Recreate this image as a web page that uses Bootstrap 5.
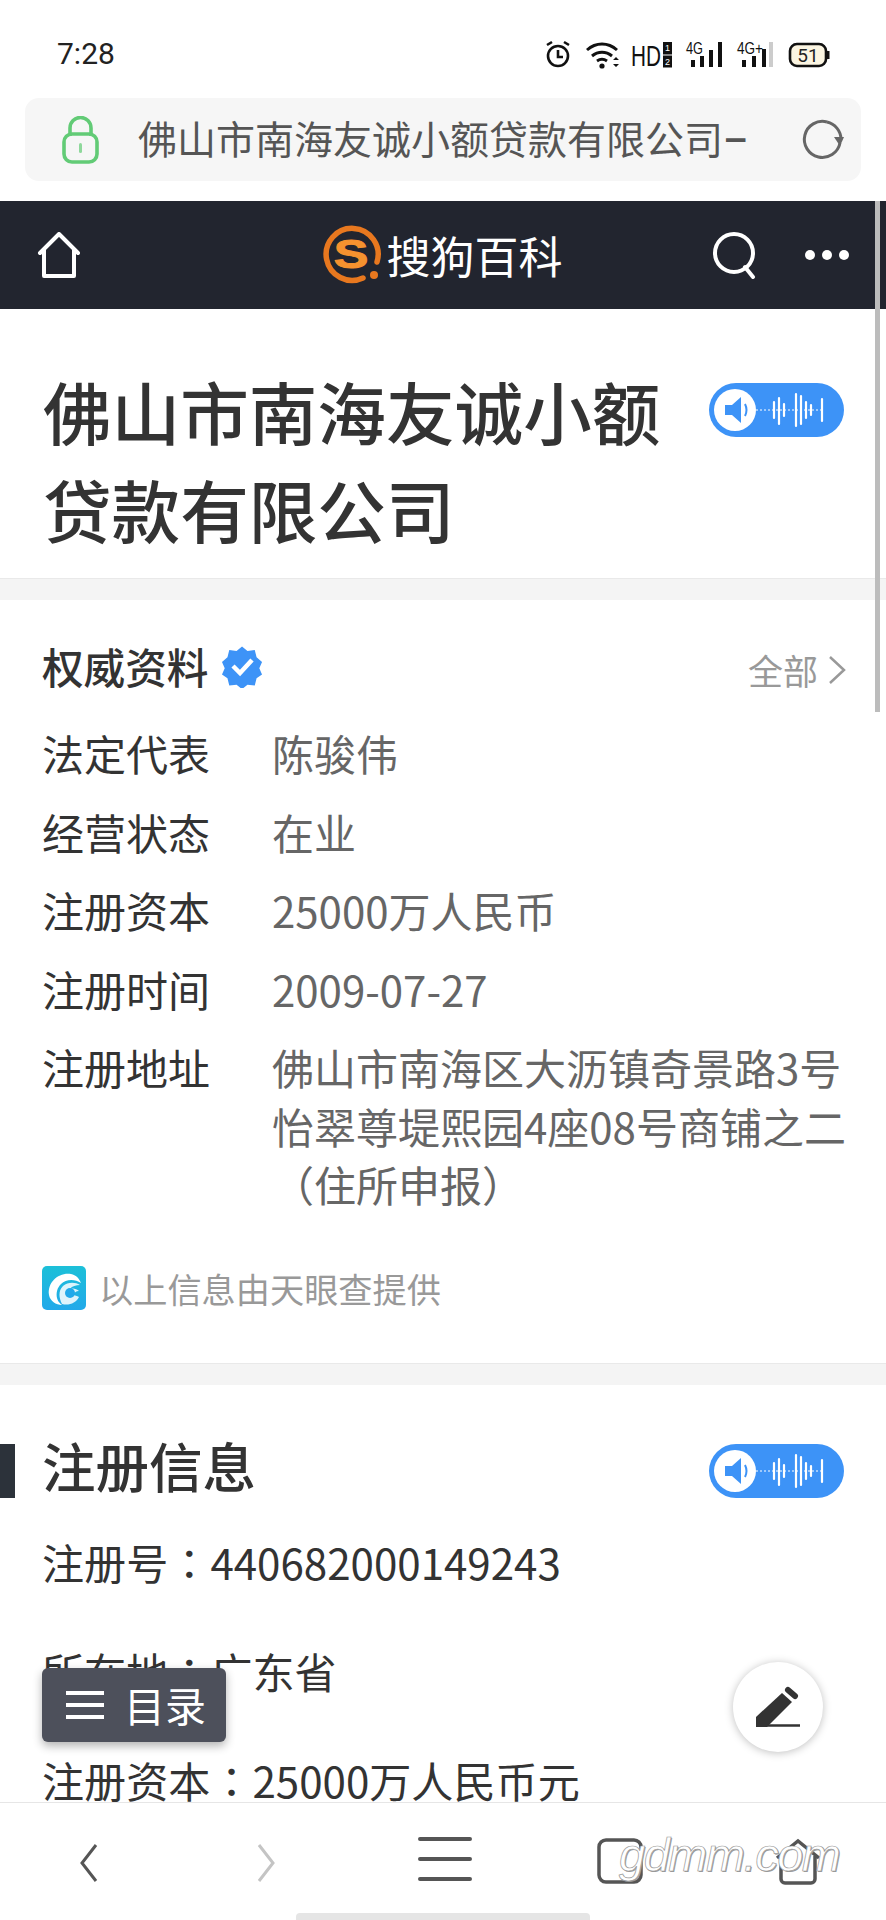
<!DOCTYPE html>
<html lang="zh-CN">
<head>
    <meta charset="UTF-8">
    <meta name="viewport" content="width=device-width, initial-scale=1.0">
    <title>佛山市南海友诚小额贷款有限公司</title>
    <link href="https://cdn.jsdelivr.net/npm/bootstrap@5.3.3/dist/css/bootstrap.min.css" rel="stylesheet">
    <style>
        html, body { height: 1920px; overflow: hidden; }
        body { font-family: "Noto Sans CJK SC", "Liberation Sans", sans-serif; color: #333; background: #fff; }
        .phone { position: relative; width: 886px; height: 1920px; overflow: hidden; }
        .status-bar { height: 98px; padding: 12px 56px 0 57px; }
        .clock { font-family: Roboto, sans-serif; font-size: 30px; color: #222; line-height: 1; margin-top: -2px; }
        .addr-bar { height: 83px; margin: 0 25px; background: #f6f6f6; border-radius: 14px; padding: 0 16px 0 36px; }
        .addr-text { font-size: 39px; color: #555; margin-left: 38px; white-space: nowrap; flex: 1; line-height: 1; }
        .addr-dash { font-family: Roboto, sans-serif; font-weight: 500; }
        .site-head { height: 108px; margin-top: 20px; background: #22252f; padding: 0 36px 0 37px; }
        .site-logo { font-size: 44px; color: #fff; font-weight: 400; line-height: 1; margin-left: 90px; }
        .page-title { padding: 52px 43px 0; height: 269px; }
        .page-title h1 { font-size: 68.6px; line-height: 98px; font-weight: 500; margin: 0; width: 640px; color: #333; }
        .band { height: 22px; background: #f4f4f4; border-top: 1px solid #e9e9e9; }
        .voice-pill { width: 135px; height: 54px; background: #3d93f7; border-radius: 27px; flex: none; }
        .page-title .voice-pill { margin-top: 22px; margin-right: -1px; }
        .info-box { padding: 0 40px 0 42px; height: 763px; }
        .info-head { height: 124px; padding-top: 36px; align-items: flex-start; }
        .info-head h2 { font-size: 41.6px; line-height: 60px; font-weight: 500; margin: 0; color: #333; }
        .more-link { font-size: 35px; color: #999; margin-top: 8px; }
        .more-link svg { margin-left: 10px; }
        .info-line { font-size: 42px; line-height: 58.5px; margin-bottom: 20px; color: #666; }
        .info-line .lbl { width: 230px; flex: none; color: #333; }
        .source-line { font-size: 34.2px; color: #999; margin-top: 49px; }
        .source-line svg { margin-right: 13px; }
        .reg-head { padding: 59px 42px 0 0; height: 147px; }
        .reg-bar { width: 15px; height: 54px; background: #2c323a; }
        .reg-head h2 { font-size: 53.5px; font-weight: 500; margin: 0 0 0 27px; line-height: 42px; color: #333; }
        .reg-line { font-size: 42.1px; line-height: 60px; padding-left: 42px; margin: 0 0 49px; color: #333; }
        .tc-colon { font-family: "Noto Sans CJK TC", sans-serif; }
        .toc-btn { position: absolute; left: 42px; top: 1668px; width: 184px; height: 74px; background: #4d505b; border-radius: 6px; box-shadow: 0 4px 10px rgba(0,0,0,.3); color: #fff; font-size: 41px; padding-left: 24px; gap: 20px; }
        .edit-fab { position: absolute; left: 733px; top: 1662px; width: 90px; height: 90px; border-radius: 50%; background: #fff; box-shadow: 0 1px 8px rgba(0,0,0,.25); }
        .bottom-bar { position: absolute; left: 0; right: 0; top: 1802px; height: 118px; background: #fff; border-top: 1px solid #e6e6e6; }
        .bottom-bar svg { position: absolute; }
        .home-pill { position: absolute; left: 296px; top: 1913px; width: 294px; height: 7px; background: #e5e5e5; border-radius: 4px 4px 0 0; }
        .scroll-thumb { position: absolute; left: 875px; top: 201px; width: 5px; height: 511px; background: #bcbcbc; }
        .watermark { position: absolute; left: 619px; top: 1825px; font-family: "Liberation Sans", sans-serif; font-style: italic; font-size: 47px; line-height: 60px; letter-spacing: -1.5px; color: #fff; -webkit-text-stroke: .7px #999; text-shadow: 1px 1px 0 #999; }
    </style>
</head>
<body>
<div class="phone">
    <div class="status-bar d-flex align-items-center justify-content-between">
        <div class="clock">7:28</div>
        <svg width="292" height="30" viewBox="0 0 292 30">
            <g fill="none" stroke="#111" stroke-width="2.6">
                <circle cx="20" cy="16" r="10"/>
                <path d="M20 10v7h5M9 5l5-3M31 5l-5-3"/>
            </g>
            <g fill="none" stroke="#111" stroke-width="3">
                <path d="M49 10c9-8 21-8 30 0M54 16c6-5 14-5 20 0M59 21c3-2 7-2 10 0"/>
            </g>
            <circle cx="64" cy="26" r="2.6" fill="#111"/>
            <path d="M75 20l3-3 3 3zM75 24l3 3 3-3z" fill="#111"/>
            <text x="93" y="26" font-family="Liberation Sans" font-size="29" fill="#111" textLength="30" lengthAdjust="spacingAndGlyphs">HD</text>
            <rect x="125" y="2" width="9" height="12.500" fill="#111"/>
            <rect x="125" y="15.500" width="9" height="12" fill="#111"/>
            <text x="127" y="11" font-family="Liberation Sans" font-size="9" fill="#fff">1</text>
            <text x="127" y="25" font-family="Liberation Sans" font-size="9" fill="#fff">2</text>
            <text x="148" y="14" font-family="Liberation Sans" font-size="16" fill="#111" textLength="17" lengthAdjust="spacingAndGlyphs">4G</text>
            <path d="M153 20h4v7h-4zM162 16h4v11h-4zM171 10h4v17h-4zM180 2h4v25h-4z" fill="#111"/>
            <text x="199" y="14" font-family="Liberation Sans" font-size="16" fill="#111" textLength="26" lengthAdjust="spacingAndGlyphs">4G+</text>
            <path d="M204 20h4v7h-4zM214 16h4v11h-4zM224 9h4v18h-4z" fill="#111"/>
            <rect x="231" y="2" width="4" height="25" fill="#ccc"/>
            <rect x="252" y="4" width="36" height="22" rx="7" fill="#fbf5e2" stroke="#111" stroke-width="2.600"/>
            <rect x="289" y="11" width="2.500" height="8" fill="#111"/>
            <text x="270" y="22" text-anchor="middle" font-family="Roboto" font-size="19" fill="#222">51</text>
        </svg>
    </div>

    <div class="addr-bar d-flex align-items-center">
        <svg width="39" height="48" viewBox="0 0 39 48">
            <path d="M9 20v-8a10.500 10.500 0 0 1 21 0v8" fill="none" stroke="#62cb76" stroke-width="3.600"/>
            <rect x="3" y="18" width="33" height="28" rx="8" fill="none" stroke="#62cb76" stroke-width="3.600"/>
            <rect x="18" y="27" width="3" height="10" rx="1.500" fill="#8ed89b"/>
        </svg>
        <div class="addr-text">佛山市南海友诚小额贷款有限公司<span class="addr-dash">–</span></div>
        <svg width="44" height="44" viewBox="0 0 44 44">
            <path d="M39 25A18 18 0 1 1 26 4" fill="none" stroke="#666" stroke-width="3"/>
            <path d="M26 4a18 18 0 0 1 14 17" fill="none" stroke="#666" stroke-width="3"/>
            <path d="M33 19h10l-4 9z" fill="#666"/>
        </svg>
    </div>

    <div class="site-head d-flex align-items-center justify-content-between">
        <svg width="44" height="46" viewBox="0 0 44 46">
            <path d="M3 21L22 2l19 19M7 18v26h30V18" fill="none" stroke="#fff" stroke-width="4" stroke-linejoin="round" stroke-linecap="round"/>
        </svg>
        <div class="site-logo d-flex align-items-center">
            <svg width="62" height="62" viewBox="0 0 62 62">
                <path d="M42 54A26 26 0 1 1 56 38" fill="none" stroke="#e8781f" stroke-width="5.500" stroke-linecap="round"/>
                <text transform="translate(30 44) scale(1.300 1)" text-anchor="middle" font-family="Liberation Sans" font-weight="700" font-size="40" fill="#f6922f" stroke="#f6922f" stroke-width="1">S</text>
                <circle cx="53" cy="51" r="4" fill="#e8781f"/>
            </svg>
            <span class="ms-1">搜狗百科</span>
        </div>
        <div class="d-flex align-items-center" style="gap: 46px;">
            <svg width="46" height="48" viewBox="0 0 46 48">
                <circle cx="22" cy="22" r="19" fill="none" stroke="#fff" stroke-width="4"/>
                <path d="M33 36l8 10" fill="none" stroke="#fff" stroke-width="4" stroke-linecap="round"/>
            </svg>
            <svg width="46" height="12" viewBox="0 0 46 12" fill="#fff">
                <circle cx="6" cy="6" r="5"/><circle cx="23" cy="6" r="5"/><circle cx="40" cy="6" r="5"/>
            </svg>
        </div>
    </div>

    <div class="page-title d-flex justify-content-between">
        <h1>佛山市南海友诚小额贷款有限公司</h1>
        <div class="voice-pill d-flex align-items-center">
            <svg width="135" height="54" viewBox="0 0 135 54">
                <circle cx="26" cy="27" r="21" fill="#fff"/>
                <path d="M16 22h7l9-8v26l-9-8h-7z" fill="#3d93f7"/>
                <path d="M36 21c2 4 2 8 0 12" fill="none" stroke="#3d93f7" stroke-width="2"/>
                <path d="M47 27h66" stroke="#fff" stroke-width="1" stroke-dasharray="2 2"/>
                <path d="M65 19v16M70 15v26M75 21v12M87 11v32M92 13v28M97 19v16M102 22v10M113 16v22" stroke="#fff" stroke-width="2.200" stroke-linecap="round"/>
            </svg>
        </div>
    </div>
    <div class="band"></div>

    <div class="info-box">
        <div class="info-head d-flex justify-content-between">
            <div class="d-flex align-items-center">
                <h2>权威资料</h2>
                <svg style="margin-left: 12px;" width="44" height="44" viewBox="0 0 44 44">
                    <path d="M22 1l6 5 8-1 2 8 6 5-3 7 3 7-6 4-2 8-8-1-6 5-6-5-8 1-2-8-6-4 3-7-3-7 6-5 2-8 8 1z" fill="#3d93f7" transform="translate(2 1.500) scale(.91)"/>
                    <path d="M13 22l7 7 12-13" fill="none" stroke="#fff" stroke-width="4.500"/>
                </svg>
            </div>
            <div class="more-link d-flex align-items-center">全部
                <svg width="18" height="30" viewBox="0 0 18 30"><path d="M2 2l14 13L2 28" fill="none" stroke="#999" stroke-width="2.500"/></svg>
            </div>
        </div>
        <div class="info-line d-flex"><div class="lbl">法定代表</div><div>陈骏伟</div></div>
        <div class="info-line d-flex"><div class="lbl">经营状态</div><div>在业</div></div>
        <div class="info-line d-flex"><div class="lbl">注册资本</div><div>25000万人民币</div></div>
        <div class="info-line d-flex"><div class="lbl">注册时间</div><div>2009-07-27</div></div>
        <div class="info-line d-flex"><div class="lbl">注册地址</div><div>佛山市南海区大沥镇奇景路3号怡翠尊堤熙园4座08号商铺之二（住所申报）</div></div>
        <div class="source-line d-flex align-items-center">
            <svg width="44" height="44" viewBox="0 0 44 44">
                <defs>
                    <linearGradient id="tycFill" x1="0" y1="0" x2="0" y2="1">
                        <stop offset="0" stop-color="#1cc0d8"/>
                        <stop offset="1" stop-color="#22a9ea"/>
                    </linearGradient>
                </defs>
                <rect width="44" height="44" rx="5" fill="url(#tycFill)"/>
                <path d="M7 29C5 16 17 6 29 8c5 1 8 4 10 9-6-4-15-4-20 1-4 4-5 9-4 14 1 4 3 5 5 7-6 0-12-4-13-10z" fill="#fff"/>
                <path d="M20 38c-3-6-4-13 1-18 5-4 12-4 17-1-4 0-8 1-10 4 3-1 7 0 9 2-3 0-5 2-6 4 2 0 4 1 6 2-3 6-10 9-17 7z" fill="#fff" opacity=".85"/>
                <circle cx="28" cy="27" r="5" fill="#22a9ea"/>
            </svg>
            以上信息由天眼查提供
        </div>
    </div>
    <div class="band"></div>

    <div class="reg-head d-flex justify-content-between">
        <div class="d-flex">
            <div class="reg-bar"></div>
            <h2>注册信息</h2>
        </div>
        <div class="voice-pill d-flex align-items-center">
            <svg width="135" height="54" viewBox="0 0 135 54">
                <circle cx="26" cy="27" r="21" fill="#fff"/>
                <path d="M16 22h7l9-8v26l-9-8h-7z" fill="#3d93f7"/>
                <path d="M36 21c2 4 2 8 0 12" fill="none" stroke="#3d93f7" stroke-width="2"/>
                <path d="M47 27h66" stroke="#fff" stroke-width="1" stroke-dasharray="2 2"/>
                <path d="M65 19v16M70 15v26M75 21v12M87 11v32M92 13v28M97 19v16M102 22v10M113 16v22" stroke="#fff" stroke-width="2.200" stroke-linecap="round"/>
            </svg>
        </div>
    </div>
    <p class="reg-line">注册号<span class="tc-colon" lang="zh-TW">：</span>440682000149243</p>
    <p class="reg-line">所在地<span class="tc-colon" lang="zh-TW">：</span>广东省</p>
    <p class="reg-line">注册资本<span class="tc-colon" lang="zh-TW">：</span>25000万人民币元</p>

    <div class="scroll-thumb"></div>

    <div class="toc-btn d-flex align-items-center">
        <svg width="38" height="30" viewBox="0 0 38 30"><path d="M0 3h38M0 15h38M0 27h38" stroke="#fff" stroke-width="4"/></svg>
        <span>目录</span>
    </div>
    <div class="edit-fab">
        <svg width="90" height="90" viewBox="0 0 90 90">
            <path d="M23 65V55L49 31l10 9-25 25z" fill="#333"/>
            <path d="M55 28l7 6" stroke="#333" stroke-width="6" stroke-linecap="round"/>
            <path d="M33 63.500h34" stroke="#333" stroke-width="2.500"/>
        </svg>
    </div>

    <div class="bottom-bar">
        <svg style="left: 79px; top: 40px;" width="20" height="40" viewBox="0 0 20 40"><path d="M17 2L3 20l14 18" fill="none" stroke="#555" stroke-width="3"/></svg>
        <svg style="left: 256px; top: 40px;" width="20" height="40" viewBox="0 0 20 40"><path d="M3 2l14 18L3 38" fill="none" stroke="#c4c4c4" stroke-width="3"/></svg>
        <svg style="left: 418px; top: 33px;" width="54" height="46" viewBox="0 0 54 46"><path d="M2 3h50M2 23h50M2 43h50" stroke="#555" stroke-width="4" stroke-linecap="round"/></svg>
        <svg style="left: 597px; top: 35px;" width="46" height="46" viewBox="0 0 46 46"><rect x="2" y="2" width="42" height="42" rx="7" fill="none" stroke="#555" stroke-width="3.500"/></svg>
        <svg style="left: 774px; top: 35px;" width="48" height="48" viewBox="0 0 48 48"><path d="M3 20L24 3l21 17M7 18v23a4 4 0 0 0 4 4h26a4 4 0 0 0 4-4V18" fill="none" stroke="#555" stroke-width="3.500"/></svg>
    </div>
    <div class="watermark">gdmm.com</div>
    <div class="home-pill"></div>
</div>
<script src="https://cdn.jsdelivr.net/npm/bootstrap@5.3.3/dist/js/bootstrap.bundle.min.js"></script>
</body>
</html>
